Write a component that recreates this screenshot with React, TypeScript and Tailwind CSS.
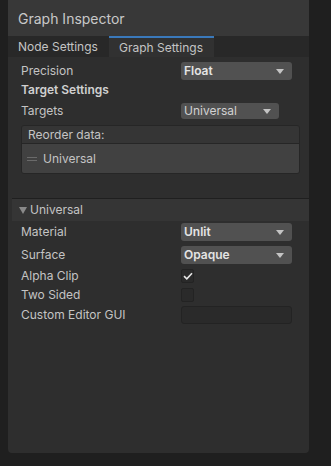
import React from "react";

const font = { fontFamily: "Inter, 'Noto Sans', sans-serif" };

const Arrow = () => (
  <svg width="8" height="5" viewBox="0 0 8 5" className="shrink-0">
    <path d="M0 0 H8 L4 5 Z" fill="#c4c4c4" />
  </svg>
);

const Dropdown = ({
  value,
  bold = false,
  width = "w-[111px]",
  height = "h-[18px]",
}: {
  value: string;
  bold?: boolean;
  width?: string;
  height?: string;
}) => (
  <div
    className={`${width} ${height} rounded-[3px] bg-[#515151] flex items-center justify-between pl-[3px] pr-[8px]`}
  >
    <span
      className={`text-[12px] leading-none ${bold ? "font-semibold text-[#e4e4e4]" : "text-[#d2d2d2]"}`}
    >
      {value}
    </span>
    <Arrow />
  </div>
);

const Row = ({
  label,
  children,
  className = "",
}: {
  label: string;
  children: React.ReactNode;
  className?: string;
}) => (
  <div className={`flex items-center ${className}`}>
    <div className="w-[160px] text-[12px] text-[#c4c4c4] leading-none">{label}</div>
    {children}
  </div>
);

const Checkbox = ({ checked }: { checked?: boolean }) => (
  <div className="w-[13px] h-[14px] rounded-[2px] bg-[#2a2a2a] border border-[#232323] flex items-center justify-center">
    {checked && (
      <svg width="10" height="8" viewBox="0 0 10 8">
        <path d="M1 4.2 L3.8 6.8 L9 1.2" stroke="#e6e6e6" strokeWidth="1.6" fill="none" />
      </svg>
    )}
  </div>
);

export default function App() {
  return (
    <div className="w-[331px] h-[466px] bg-[#1f1f1f] overflow-hidden" style={font}>
      <div className="ml-[8px] w-[301px] h-[453px] bg-[#2e2e2e] rounded-b-[4px] flex flex-col">
        {/* title */}
        <div className="h-[36px] bg-[#383838] flex items-center pl-[10px] text-[14px] text-[#c8c8c8]">
          Graph Inspector
        </div>

        {/* tabs */}
        <div className="h-[21px] bg-[#282828] flex text-[12px]">
          <div className="w-[101px] pl-[10px] flex items-center text-[#c4c4c4]">Node Settings</div>
          <div className="w-[105px] border-t-2 border-[#3a79bb] bg-[#313131] pl-[10px] flex items-center text-[#c4c4c4]">
            Graph Settings
          </div>
        </div>

        {/* graph settings */}
        <div className="pl-[13px] pt-[5px]">
          <Row label="Precision">
            <Dropdown value="Float" bold />
          </Row>
          <div className="h-[19px] flex items-center text-[12px] font-semibold text-[#d0d0d0]">
            Target Settings
          </div>
          <Row label="Targets" className="mt-[4px]">
            <Dropdown value="Universal" width="w-[98px]" height="h-[16px]" />
          </Row>

          <div className="mt-[6px] w-[279px] rounded-[3px] border border-[#262626] overflow-hidden">
            <div className="h-[18px] bg-[#353535] border-b border-[#262626] flex items-center pl-[6px] text-[12px] text-[#c4c4c4]">
              Reorder data:
            </div>
            <div className="h-[29px] bg-[#414141] flex items-center pl-[5px] text-[12px] text-[#c4c4c4]">
              <div className="w-[10px] flex flex-col gap-[2px] mr-[6px]">
                <div className="h-px bg-[#6a6a6a]" />
                <div className="h-px bg-[#6a6a6a]" />
              </div>
              Universal
            </div>
          </div>
        </div>

        {/* universal foldout */}
        <div className="mt-[24px] ml-[4px] border-t border-[#1f1f1f] h-[23px] bg-[#353535] flex items-center pl-[7px] text-[12px] text-[#c4c4c4]">
          <svg width="8" height="7" viewBox="0 0 8 7" className="mr-[3px]">
            <path d="M0 0 H8 L4 7 Z" fill="#8a8a8a" />
          </svg>
          Universal
        </div>

        <div className="pl-[13px] pt-[2px]">
          <Row label="Material">
            <Dropdown value="Unlit" bold />
          </Row>
          <Row label="Surface" className="mt-[5px]">
            <Dropdown value="Opaque" bold />
          </Row>
          <Row label="Alpha Clip" className="mt-[5px]">
            <Checkbox checked />
          </Row>
          <Row label="Two Sided" className="mt-[5px]">
            <Checkbox />
          </Row>
          <Row label="Custom Editor GUI" className="mt-[4px]">
            <div className="w-[111px] h-[18px] rounded-[3px] bg-[#2a2a2a] border border-[#232323]" />
          </Row>
        </div>
      </div>
    </div>
  );
}
